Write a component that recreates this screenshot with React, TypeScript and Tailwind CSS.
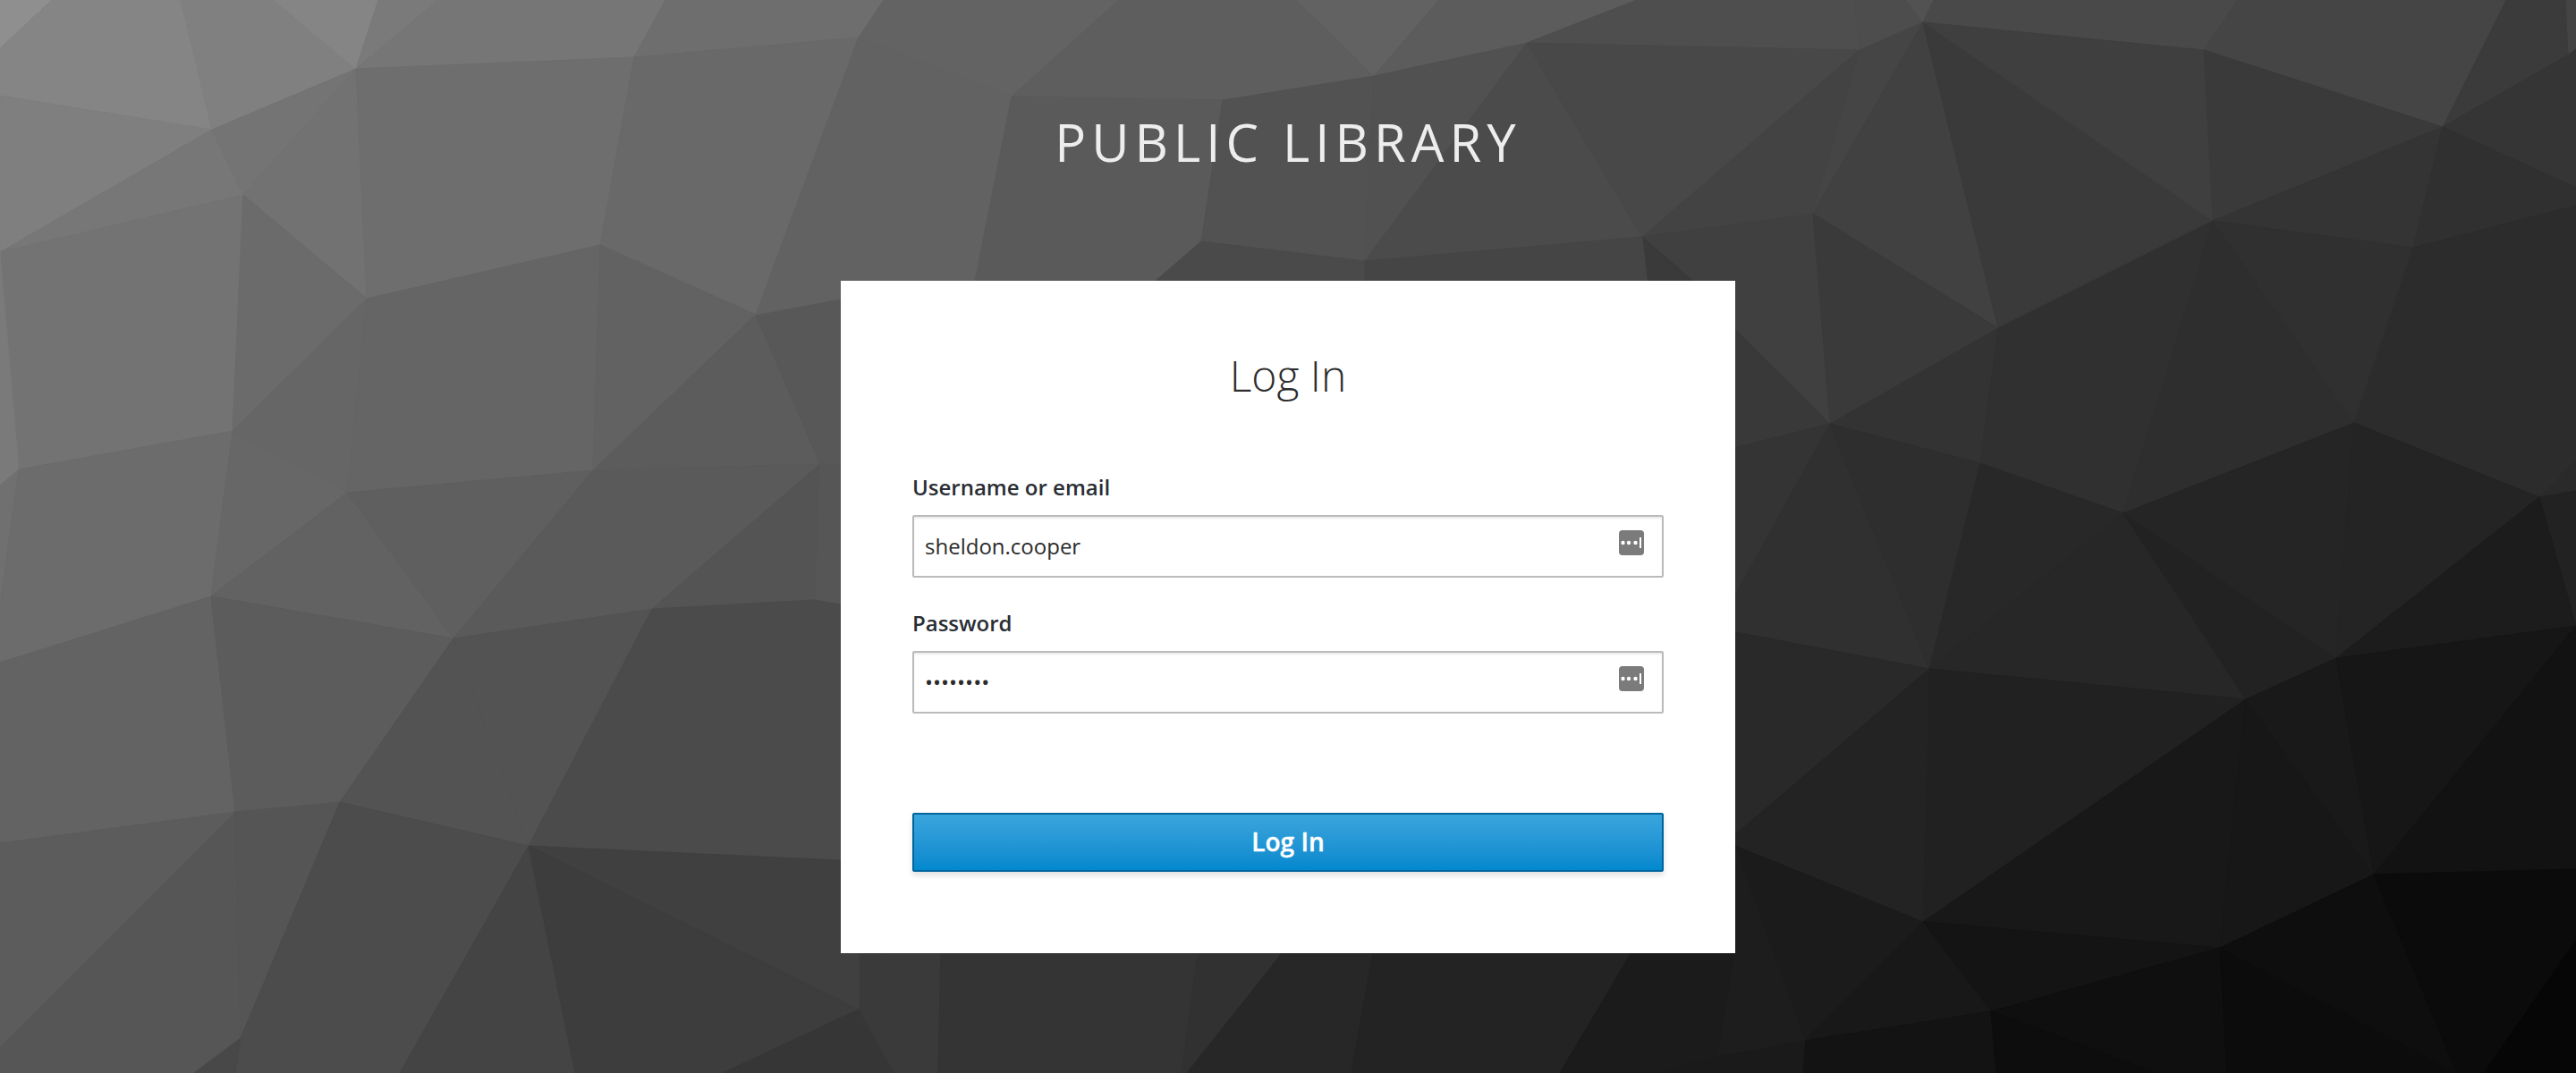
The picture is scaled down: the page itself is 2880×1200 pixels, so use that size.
// Login page over a low-poly grey backdrop
const facets: [string, string][] = [
  ['0,0 58,0 0,54', '#8f8f8f'],
  ['58,0 202,0 237,145 0,107 0,54', '#858585'],
  ['202,0 306,0 398,77 237,145', '#808080'],
  ['306,0 423,0 398,77', '#858585'],
  ['423,0 490,0 398,77', '#7a7a7a'],
  ['490,0 744,0 709,64 398,77', '#767676'],
  ['744,0 988,0 960,42 709,64', '#6e6e6e'],
  ['0,107 237,145 0,282', '#7f7f7f'],
  ['237,145 272,218 0,282', '#777777'],
  ['237,145 398,77 272,218', '#747474'],
  ['398,77 410,334 272,218', '#727272'],
  ['398,77 709,64 671,274 410,334', '#6e6e6e'],
  ['709,64 960,42 845,352 671,274', '#696969'],
  ['0,282 272,218 260,482 21,525', '#737373'],
  ['272,218 410,334 260,482', '#6b6b6b'],
  ['410,334 388,551 260,482', '#666666'],
  ['410,334 671,274 663,526 388,551', '#656565'],
  ['671,274 845,352 663,526', '#626262'],
  ['845,352 917,519 663,526', '#5c5c5c'],
  ['845,352 960,330 960,519 917,519', '#585858'],
  ['0,282 21,525 0,543', '#7a7a7a'],
  ['0,543 21,525 0,677', '#707070'],
  ['21,525 260,482 236,667 0,741 0,677', '#6c6c6c'],
  ['260,482 388,551 236,667', '#676767'],
  ['388,551 507,714 236,667', '#626262'],
  ['388,551 663,526 507,714', '#5f5f5f'],
  ['663,526 729,681 507,714', '#5a5a5a'],
  ['663,526 917,519 729,681', '#5a5a5a'],
  ['917,519 911,671 729,681', '#545454'],
  ['917,519 960,519 960,680 911,671', '#565656'],
  ['0,741 236,667 263,908 0,943', '#636363'],
  ['236,667 507,714 380,897 263,908', '#5c5c5c'],
  ['507,714 591,946 380,897', '#535353'],
  ['507,714 729,681 591,946', '#535353'],
  ['729,681 911,671 960,680 960,963 591,946', '#4b4b4b'],
  ['0,943 263,908 0,1171', '#5c5c5c'],
  ['0,1171 263,908 269,1161 217,1200 0,1200', '#565656'],
  ['263,908 380,897 269,1161', '#555555'],
  ['380,897 591,946 447,1200 263,1200 269,1161', '#4c4c4c'],
  ['269,1161 263,1200 217,1200', '#484848'],
  ['591,946 643,1200 447,1200', '#444444'],
  ['591,946 960,963 960,1129', '#404040'],
  ['591,946 960,1129 808,1200 643,1200', '#3d3d3d'],
  ['960,1129 1000,1200 808,1200', '#363636'],
  ['960,42 988,0 1251,0 1131,108', '#636363'],
  ['1251,0 1450,0 1536,85 1367,112 1131,108', '#5e5e5e'],
  ['1450,0 1609,0 1536,85', '#626262'],
  ['1609,0 1830,0 1707,48 1536,85', '#5c5c5c'],
  ['1830,0 2073,0 2079,56 1707,48', '#4e4e4e'],
  ['960,42 1131,108 1089,320 960,330 845,352', '#626262'],
  ['1131,108 1367,112 1343,270', '#5a5a5a'],
  ['1131,108 1343,270 1285,320 1089,320', '#5a5a5a'],
  ['1367,112 1536,85 1526,292 1343,270', '#525252'],
  ['1536,85 1707,48 1526,292', '#515151'],
  ['1707,48 1836,265 1526,292', '#4b4b4b'],
  ['1707,48 2079,56 1836,265', '#484848'],
  ['1343,270 1526,292 1526,320 1285,320', '#4a4a4a'],
  ['1526,292 1836,265 1842,320 1526,320', '#454545'],
  ['1836,265 2079,56 2027,239', '#434343'],
  ['2073,0 2131,0 2150,25 2079,56', '#4d4d4d'],
  ['2131,0 2162,0 2150,25', '#525252'],
  ['2162,0 2502,0 2464,56 2150,25', '#494949'],
  ['2502,0 2802,0 2731,142 2464,56', '#454545'],
  ['2802,0 2869,0 2872,61 2731,142', '#3b3b3b'],
  ['2869,0 2880,0 2880,55 2872,61', '#444444'],
  ['2079,56 2150,25 2027,239', '#454545'],
  ['2150,25 2234,367 2027,239', '#414141'],
  ['2150,25 2474,247 2234,367', '#3a3a3a'],
  ['2150,25 2464,56 2474,247', '#3f3f3f'],
  ['2464,56 2731,142 2474,247', '#3a3a3a'],
  ['2731,142 2872,61 2880,55 2880,210', '#353535'],
  ['2474,247 2731,142 2698,277', '#343434'],
  ['2731,142 2880,210 2880,230 2698,277', '#303030'],
  ['1836,265 2027,239 2046,474', '#404040'],
  ['1836,265 2046,474 1930,503 1900,320', '#393939'],
  ['2027,239 2234,367 2046,474', '#3a3a3a'],
  ['1930,503 2046,474 1930,684', '#343434'],
  ['2046,474 2234,367 2214,518', '#333333'],
  ['2234,367 2474,247 2374,574 2214,518', '#303030'],
  ['2474,247 2632,473 2374,574', '#2e2e2e'],
  ['2474,247 2698,277 2632,473', '#303030'],
  ['2698,277 2880,230 2880,516 2839,556 2632,473', '#2c2c2c'],
  ['1930,684 2046,474 2157,748 1930,705', '#303030'],
  ['2046,474 2214,518 2157,748', '#2e2e2e'],
  ['2214,518 2374,574 2157,748', '#282828'],
  ['2374,574 2511,782 2157,748', '#272727'],
  ['2374,574 2612,736 2511,782', '#222222'],
  ['2374,574 2632,473 2612,736', '#252525'],
  ['2632,473 2839,556 2612,736', '#242424'],
  ['2839,556 2880,516 2880,549', '#2a2a2a'],
  ['2839,556 2880,549 2880,700', '#222222'],
  ['2612,736 2839,556 2880,700', '#1c1c1c'],
  ['1930,705 2157,748 1930,942', '#292929'],
  ['2157,748 2511,782 2150,1031', '#212121'],
  ['1930,942 2157,748 2150,1031', '#232323'],
  ['2150,1031 2511,782 2482,1060', '#181818'],
  ['2511,782 2654,978 2482,1060', '#171717'],
  ['2511,782 2612,736 2654,978', '#191919'],
  ['2612,736 2880,700 2654,978', '#161616'],
  ['2880,700 2880,972 2654,978', '#121212'],
  ['1930,942 2150,1031 2018,1164', '#1b1b1b'],
  ['1920,940 1940,946 2018,1164 1920,1182', '#1d1d1d'],
  ['2018,1164 2150,1031 2226,1131', '#181818'],
  ['2150,1031 2482,1060 2226,1131', '#141414'],
  ['2226,1131 2482,1060 2490,1200 2410,1200', '#0f0f0f'],
  ['2018,1164 2226,1131 2232,1200 2015,1200', '#131313'],
  ['2226,1131 2410,1200 2232,1200', '#0d0d0d'],
  ['1920,1182 2018,1164 2015,1200 1850,1200', '#1a1a1a'],
  ['2482,1060 2747,1200 2490,1200', '#0c0c0c'],
  ['2482,1060 2654,978 2747,1200', '#0e0e0e'],
  ['2654,978 2880,972 2880,1052 2777,1200 2747,1200', '#0b0b0b'],
  ['2880,1052 2880,1200 2777,1200', '#060606'],
  ['960,1129 1000,1060 1052,1060 1049,1200 1000,1200', '#3a3a3a'],
  ['1052,1060 1340,1060 1321,1200 1049,1200', '#343434'],
  ['1340,1060 1438,1060 1327,1200 1321,1200', '#313131'],
  ['1438,1060 1536,1060 1511,1200 1327,1200', '#272727'],
  ['1536,1060 1827,1060 1744,1200 1511,1200', '#232323'],
  ['1827,1060 1940,1060 1920,1182 1850,1200 1744,1200', '#1b1b1b'],
]

function KeyIcon() {
  return (
    <svg className="absolute right-[22px] top-[17px]" width="28" height="28" viewBox="0 0 28 28">
      <rect width="28" height="28" rx="4" fill="#7b7b7b" />
      <circle cx="4.5" cy="14" r="2.2" fill="#fff" />
      <circle cx="11" cy="14" r="2.2" fill="#fff" />
      <circle cx="18.5" cy="14" r="2.2" fill="#fff" />
      <rect x="23" y="8" width="2" height="12" fill="#fff" />
    </svg>
  )
}

function Field({ label, type, value }: { label: string; type: string; value: string }) {
  return (
    <div className="mb-[35px]">
      <label className="block mb-[15px] text-[24px] leading-[32px] font-semibold text-[#292e34]">{label}</label>
      <div className="relative">
        <input
          type={type}
          defaultValue={value}
          className="block w-full h-[70px] px-[12px] pb-[2px] text-[24px] text-[#2b2b2b] bg-white border-2 border-[#bbbbbb] rounded-[2px] shadow-[inset_0_2px_2px_rgba(3,3,3,0.08)] outline-none"
        />
        <KeyIcon />
      </div>
    </div>
  )
}

export default function App() {
  return (
    <div className="relative h-[1200px] overflow-hidden bg-[#3a3a3a] font-['Open_Sans',sans-serif]">
      <svg className="absolute inset-0" width="2880" height="1200" viewBox="0 0 2880 1200">
        {facets.map(([points, fill]) => (
          <polygon key={points} points={points} fill={fill} stroke={fill} strokeWidth="1" />
        ))}
      </svg>

      <div className="relative flex flex-col items-center pt-[124px]">
        <h1 className="text-[58px] leading-[70px] tracking-[6px] text-[#ededed] font-normal">PUBLIC LIBRARY</h1>

        <main className="w-[1000px] h-[752px] mt-[120px] px-[80px] pt-[74px] bg-white">
          <h2 className="mb-[77px] text-center text-[48px] leading-[64px] font-light text-[#2e2e2e]">Log In</h2>
          <form>
            <Field label="Username or email" type="text" value="sheldon.cooper" />
            <Field label="Password" type="password" value="12345678" />
            <button
              type="button"
              className="block w-full h-[66px] mt-[111px] pb-[2px] text-[28px] font-semibold text-white [-webkit-text-stroke:0.4px_white] bg-gradient-to-b from-[#39a5dc] to-[#0088ce] border-2 border-[#00659c] rounded-[2px] shadow-[0_4px_6px_rgba(3,3,3,0.12)]"
            >
              Log In
            </button>
          </form>
        </main>
      </div>
    </div>
  )
}
